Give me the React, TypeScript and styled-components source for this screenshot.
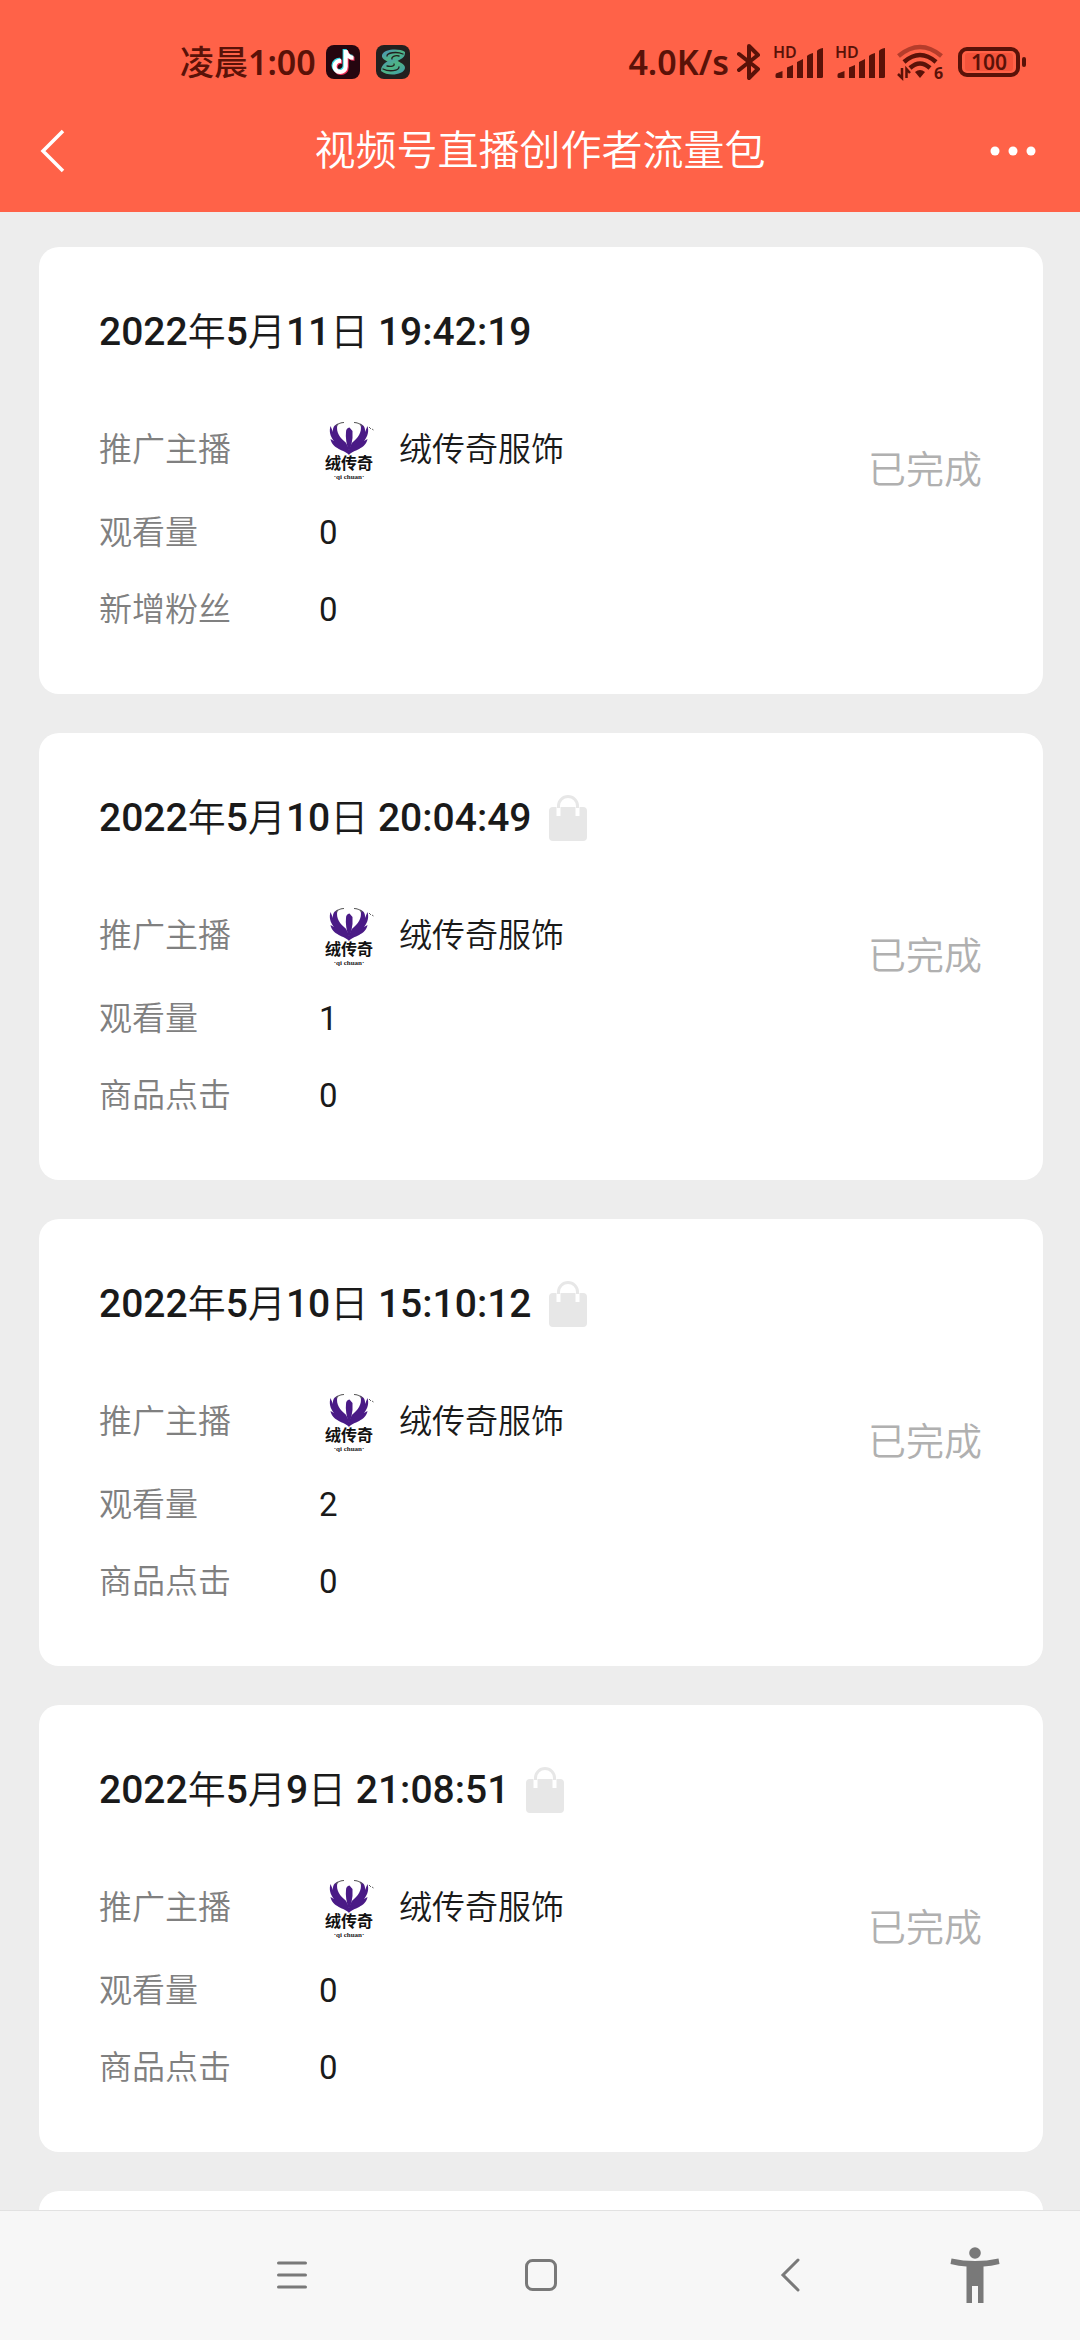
import React from 'react';
import styled, { createGlobalStyle } from 'styled-components';
import { FaTiktok } from 'react-icons/fa6';

const GlobalStyle = createGlobalStyle`
  *, *::before, *::after { box-sizing: border-box; }
  body {
    margin: 0;
    background: #ededed;
    font-family: Roboto, "Noto Sans CJK SC", sans-serif;
    color: #1a1a1a;
  }
  h1, h2, dl, dd, dt { margin: 0; font-weight: 400; }
  button { border: 0; padding: 0; background: none; color: inherit; font: inherit; cursor: pointer; }
  svg { display: block; flex: none; line-height: 1; }
`;

const Screen = styled.div`
  display: flex;
  flex-direction: column;
  height: 100vh;
`;

const Header = styled.header`
  flex: none;
  background: #ff6248;
`;

const StatusBar = styled.div`
  display: flex;
  align-items: center;
  justify-content: space-between;
  height: 90px;
  padding: 34px 54px 0 180px;
  color: #5a1208;
  font: 600 34px/56px "Noto Sans", "Noto Sans CJK SC", sans-serif;
`;

const StatusGroup = styled.div<{ $gap: number }>`
  display: flex;
  align-items: center;
  gap: ${(p) => p.$gap}px;
`;

const StatusText = styled.span<{ $pull: number }>`
  margin-right: -${(p) => p.$pull}px;
`;

const DayPart = styled.span`
  font-weight: 500;
`;

const AppBadge = styled.span<{ $bg: string }>`
  display: grid;
  place-items: center;
  width: 34px;
  height: 34px;
  border-radius: 8px;
  background: ${(p) => p.$bg};

  svg { grid-area: 1 / 1; }
`;

const NoteLayer = styled(FaTiktok)<{ $shift: number }>`
  transform: translate(${(p) => p.$shift}px, ${(p) => p.$shift}px);
`;

const TitleBar = styled.div`
  display: grid;
  grid-template-columns: 120px 1fr 120px;
  align-items: center;
  height: 122px;
  color: #fff;
`;

const Title = styled.h1`
  text-align: center;
  font-weight: 350;
  font-size: 41px;
  line-height: 60px;
`;

const BarButton = styled.button<{ $end?: boolean }>`
  display: flex;
  align-items: center;
  justify-content: ${(p) => (p.$end ? 'flex-end' : 'flex-start')};
  height: 100%;
  padding: 0 ${(p) => (p.$end ? 44 : 39)}px;
`;

const Feed = styled.main`
  flex: 1;
  min-height: 0;
  display: flex;
  flex-direction: column;
  gap: 39px;
  padding: 35px 37px 39px 39px;
  overflow-y: auto;
  scrollbar-width: none;
`;

const Card = styled.article`
  flex: none;
  display: flex;
  align-items: center;
  justify-content: space-between;
  padding: 60px 61px 61px 60px;
  border-radius: 20px;
  background: #fff;
`;

const CardTitle = styled.h2`
  display: flex;
  align-items: center;
  gap: 17px;
  margin-bottom: 62px;
  font-weight: 500;
  font-size: 39px;
  line-height: 50px;
`;

const DateUnit = styled.span`
  font-weight: 350;
  font-size: 38px;
`;

const Stats = styled.dl`
  display: flex;
  flex-direction: column;
  gap: 30px;
`;

const Row = styled.div`
  display: flex;
  align-items: center;
  font-size: 33px;
  line-height: 47px;
`;

const Label = styled.dt`
  width: 220px;
  color: #808080;
  font-weight: 350;
`;

const Value = styled.dd`
  display: flex;
  align-items: center;
  gap: 20px;
`;

const AvatarArt = styled.svg`
  margin: -2px 0;
`;

const HostName = styled.span`
  font-weight: 350;
`;

const Status = styled.span`
  color: #b0b0b0;
  font-weight: 350;
  font-size: 38px;
  line-height: 50px;
`;

const SystemNav = styled.nav`
  flex: none;
  display: grid;
  grid-template-columns: repeat(3, 1fr) 122px;
  height: 130px;
  padding: 0 44px 2px 168px;
  border-top: 1px solid #e2e2e2;
  background: #f7f7f7;
  color: #797979;
`;

const NavButton = styled.button`
  display: grid;
  place-items: center;
`;

function Bluetooth() {
  return (
    <svg width="24" height="38" viewBox="0 0 24 38" fill="none" stroke="currentColor" strokeWidth="4" strokeLinejoin="round" strokeLinecap="round">
      <path d="M2 11 L21 26 L12 35 V3 L21 12 L2 27" />
    </svg>
  );
}

function Signal() {
  return (
    <svg width="50" height="50" viewBox="0 -8 50 50" fill="currentColor">
      <text x="0" y="13" fontSize="16" fontWeight="600">HD</text>
      <path d="M3 28.500 L9.500 26 V33 H4 Q2.500 33 2.500 31.500 V30 Z" />
      <path d="M14 22.500 L20 20 V33 H14 Z" />
      <path d="M24 17 L30 14 V33 H24 Z" />
      <path d="M34 11 Q35 9.500 40 8 V33 H34 Z" />
      <path d="M44 6 Q45 4 50 3 V31.500 Q50 33 48.500 33 H44 Z" />
    </svg>
  );
}

function Wifi() {
  return (
    <svg width="49" height="52" viewBox="0 -8 49 52" fill="none" stroke="currentColor" strokeWidth="4.500">
      <path d="M1.500 12 Q23 -6 44.500 12" opacity="0.45" />
      <path d="M7 18 Q23 4 39 18" />
      <path d="M13 24 Q23 15 33 24" />
      <path d="M18 28 Q23 24 28 28 L23 34 Z" fill="currentColor" stroke="none" />
      <path d="M5 24 V34 L1 30 M9.500 34 V25 L13 29" strokeWidth="2.500" />
      <text x="37" y="35" fontSize="16" fontWeight="700" fill="currentColor" stroke="none">6</text>
    </svg>
  );
}

function Battery() {
  return (
    <svg width="68" height="30" viewBox="0 0 68 30" fill="none">
      <rect x="7" y="6" width="48" height="18" rx="3" fill="#f5533b" />
      <rect x="2" y="2" width="58" height="26" rx="7" stroke="currentColor" strokeWidth="4" />
      <rect x="64" y="10" width="4" height="10" rx="2" fill="currentColor" />
      <text x="31" y="23" fontSize="21" fontWeight="600" textAnchor="middle" fill="currentColor">100</text>
    </svg>
  );
}

function Spiral() {
  return (
    <svg width="26" height="28" viewBox="0 0 26 28" fill="none" strokeLinecap="round">
      <defs>
        <linearGradient id="spiral" x1="0" y1="0" x2="1" y2="1">
          <stop offset="0" stopColor="#4a8fc0" />
          <stop offset="0.500" stopColor="#4fb583" />
          <stop offset="1" stopColor="#3f9ab0" />
        </linearGradient>
      </defs>
      <g fill="url(#spiral)">
        <path d="M25 4 C19 0 4 1 2 7 C1 12 8 13 13 16 C15 14 18 13 21 11 C25 9 25 6 25 4 Z" />
        <path d="M1 23 C8 29 24 27 25 20 C25 15 18 14 12 10 C8 14 1 15 1 23 Z" />
      </g>
      <path d="M23 6 C16 3 7 5 7 8 M19 8 C15 7 11 9 12 11 M3 21 C9 24 19 23 19 19 M7 18 C11 19 15 18 14 16" stroke="#23201f" strokeWidth="1.300" />
    </svg>
  );
}

function Bag() {
  return (
    <svg width="38" height="46" viewBox="0 0 38 46" fill="none" aria-hidden="true">
      <rect y="12" width="38" height="34" rx="4" fill="#e7e7e7" />
      <path d="M9.500 12 V21 M28.500 12 V21" stroke="#fff" strokeWidth="4" />
      <path d="M9.500 13 V11 A9.500 9.500 0 0 1 28.500 11 V13" stroke="#e7e7e7" strokeWidth="3" />
    </svg>
  );
}

function Avatar() {
  return (
    <AvatarArt width="60" height="64" viewBox="0 -2 60 64" role="img" aria-label="绒传奇">
      <g fill="#4a1a86">
        <path d="M30 36 C26 31 13 30 11.500 20 L15 22 C11 17 10 12 11.500 7 L14 13 C13.500 9 15 6 19 4.500 C16.500 10 19 17 25 22 C28 24 29 28 30 31 Z" />
        <path d="M30 36 C34 31 47 30 48.500 20 L45 22 C49 17 50 12 48.500 7 L46 13 C46.500 9 45 6 41 4.500 C43.500 10 41 17 35 22 C32 24 31 28 30 31 Z" />
        <path d="M27 13 Q27 9 30.500 8.500 L33.500 12 Q34 19 32.500 25 L30 33 Q26 21 27 13 Z" />
      </g>
      <path d="M17 7 Q20 3.500 25 3.500 M43 7 Q40 3.500 35 3.500" fill="none" stroke="#555" strokeWidth="1.200" />
      <path d="M50 8 l2 2 M53 10 l1.500 1" stroke="#666" strokeWidth="1" />
      <text x="30" y="50" fontSize="16" fontWeight="700" textAnchor="middle" fill="#111" fontFamily="Noto Sans CJK SC">绒传奇</text>
      <text x="30" y="60" fontSize="7" fontWeight="700" textAnchor="middle" fill="#222" fontFamily="Liberation Serif">·qi chuan·</text>
    </AvatarArt>
  );
}

type Item = { date: [number, number, number]; time: string; bag?: boolean; views: number; label: string; count: number };

const items: Item[] = [
  { date: [2022, 5, 11], time: '19:42:19', views: 0, label: '新增粉丝', count: 0 },
  { date: [2022, 5, 10], time: '20:04:49', bag: true, views: 1, label: '商品点击', count: 0 },
  { date: [2022, 5, 10], time: '15:10:12', bag: true, views: 2, label: '商品点击', count: 0 },
  { date: [2022, 5, 9], time: '21:08:51', bag: true, views: 0, label: '商品点击', count: 0 },
];

function PromotionCard({ item }: { item: Item }) {
  const [year, month, day] = item.date;
  return (
    <Card>
      <div>
        <CardTitle>
          <span>
            {year}
            <DateUnit>年</DateUnit>
            {month}
            <DateUnit>月</DateUnit>
            {day}
            <DateUnit>日</DateUnit> {item.time}
          </span>
          {item.bag && <Bag />}
        </CardTitle>
        <Stats>
          <Row>
            <Label>推广主播</Label>
            <Value>
              <Avatar />
              <HostName>绒传奇服饰</HostName>
            </Value>
          </Row>
          <Row>
            <Label>观看量</Label>
            <Value>{item.views}</Value>
          </Row>
          <Row>
            <Label>{item.label}</Label>
            <Value>{item.count}</Value>
          </Row>
        </Stats>
      </div>
      <Status>已完成</Status>
    </Card>
  );
}

export default function App() {
  return (
    <Screen>
      <GlobalStyle />
      <Header>
        <StatusBar>
          <StatusGroup $gap={16}>
            <StatusText $pull={6}>
              <DayPart>凌晨</DayPart>1:00
            </StatusText>
            <AppBadge $bg="#25060f">
              <NoteLayer size={24} color="#35d9e6" $shift={-1} />
              <NoteLayer size={24} color="#f0315c" $shift={1} />
              <NoteLayer size={24} color="#fff" $shift={0} />
            </AppBadge>
            <AppBadge $bg="#23201f">
              <Spiral />
            </AppBadge>
          </StatusGroup>
          <StatusGroup $gap={12}>
            <StatusText $pull={4}>4.0K/s</StatusText>
            <Bluetooth />
            <Signal />
            <Signal />
            <Wifi />
            <Battery />
          </StatusGroup>
        </StatusBar>
        <TitleBar>
          <BarButton aria-label="返回">
            <svg width="26" height="44" viewBox="0 0 26 44" fill="none" stroke="currentColor" strokeWidth="3.500">
              <path d="M24 2 L4 22 L24 42" />
            </svg>
          </BarButton>
          <Title>视频号直播创作者流量包</Title>
          <BarButton $end aria-label="更多">
            <svg width="46" height="10" viewBox="0 0 46 10" fill="currentColor">
              <circle cx="5" cy="5" r="4.500" />
              <circle cx="23" cy="5" r="4.500" />
              <circle cx="41" cy="5" r="4.500" />
            </svg>
          </BarButton>
        </TitleBar>
      </Header>
      <Feed>
        {items.map((item) => (
          <PromotionCard key={item.time} item={item} />
        ))}
        <Card />
      </Feed>
      <SystemNav>
        <NavButton aria-label="最近任务">
          <svg width="32" height="32" viewBox="0 0 32 32" stroke="currentColor" strokeWidth="3" strokeLinecap="round">
            <path d="M2.500 4 H29.500 M2.500 16 H29.500 M2.500 28 H29.500" />
          </svg>
        </NavButton>
        <NavButton aria-label="主屏幕">
          <svg width="32" height="32" viewBox="0 0 32 32" fill="none" stroke="currentColor" strokeWidth="3">
            <rect x="1.500" y="1.500" width="29" height="29" rx="6" />
          </svg>
        </NavButton>
        <NavButton aria-label="返回上一级">
          <svg width="20" height="34" viewBox="0 0 20 34" fill="none" stroke="currentColor" strokeWidth="3" strokeLinecap="round">
            <path d="M18 2 L3 17 L18 32" />
          </svg>
        </NavButton>
        <NavButton aria-label="无障碍">
          <svg width="50" height="56" viewBox="0 0 50 56" fill="currentColor">
            <circle cx="25" cy="6" r="5.800" />
            <path d="M1.500 11.500 Q25 16.500 48.500 11.500 L49.500 17 Q41 19 33.500 19.500 V56 H28 V39 H22 V56 H16.500 V19.500 Q9 19 0.500 17 Z" />
          </svg>
        </NavButton>
      </SystemNav>
    </Screen>
  );
}
